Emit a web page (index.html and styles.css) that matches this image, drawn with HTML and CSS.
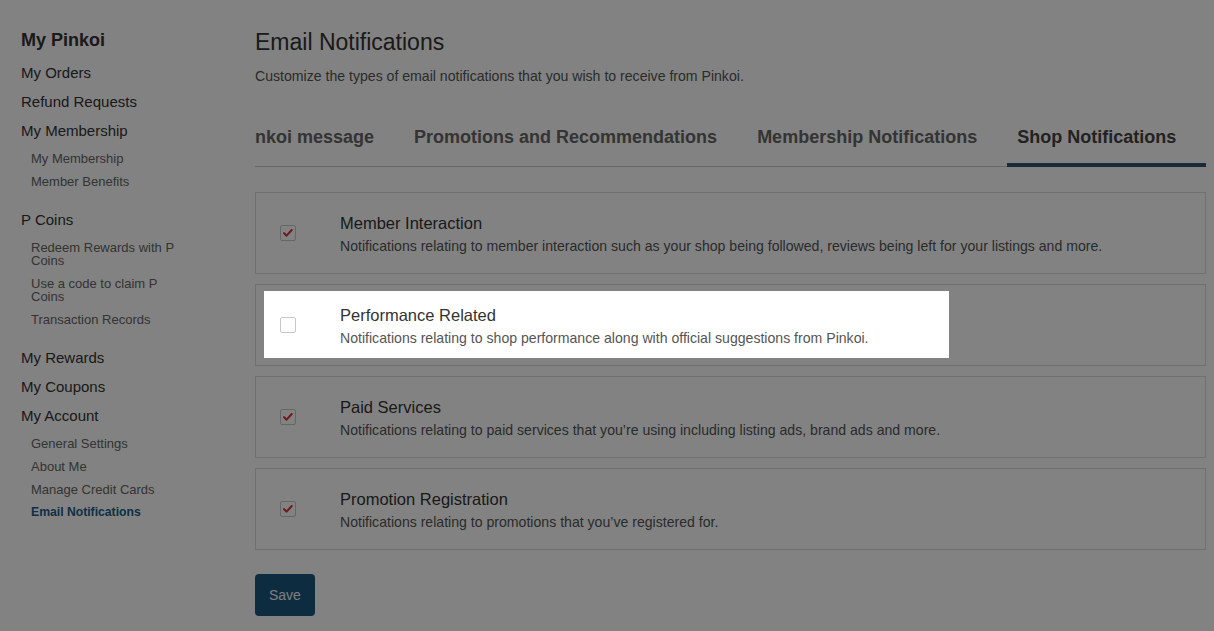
FILE: index.html
```html
<!DOCTYPE html>
<html lang="en">
<head>
<meta charset="utf-8">
<title>Email Notifications</title>
<link rel="stylesheet" href="styles.css">
</head>
<body>
<div class="layout">
  <aside class="sidebar">
    <h2 class="side-title">My Pinkoi</h2>
    <ul class="nav">
      <li class="nav-head">My Orders</li>
      <li class="nav-head">Refund Requests</li>
      <li class="nav-head">My Membership</li>
      <li class="nav-group">
        <ul class="sub">
          <li>My Membership</li>
          <li>Member Benefits</li>
        </ul>
      </li>
      <li class="nav-head">P Coins</li>
      <li class="nav-group">
        <ul class="sub">
          <li>Redeem Rewards with P Coins</li>
          <li>Use a code to claim P Coins</li>
          <li>Transaction Records</li>
        </ul>
      </li>
      <li class="nav-head">My Rewards</li>
      <li class="nav-head">My Coupons</li>
      <li class="nav-head">My Account</li>
      <li class="nav-group">
        <ul class="sub">
          <li>General Settings</li>
          <li>About Me</li>
          <li>Manage Credit Cards</li>
          <li class="active">Email Notifications</li>
        </ul>
      </li>
    </ul>
  </aside>

  <main class="main">
    <h1 class="page-title">Email Notifications</h1>
    <p class="page-desc">Customize the types of email notifications that you wish to receive from Pinkoi.</p>

    <div class="tabs">
      <div class="tab-list">
        <div class="tab">Pinkoi message</div>
        <div class="tab">Promotions and Recommendations</div>
        <div class="tab">Membership Notifications</div>
        <div class="tab tab-active">Shop Notifications</div>
      </div>
    </div>

    <div class="cards">
      <div class="card">
        <span class="check checked"><svg viewBox="0 0 16 16" width="14" height="14"><path d="M3.5 8.2 L6.4 11 L12.3 4.6" fill="none" stroke="#d6393d" stroke-width="2.4" stroke-linecap="round" stroke-linejoin="round"/></svg></span>
        <div class="card-text">
          <div class="card-title">Member Interaction</div>
          <div class="card-desc">Notifications relating to member interaction such as your shop being followed, reviews being left for your listings and more.</div>
        </div>
      </div>
      <div class="card">
        <span class="check"></span>
        <div class="card-text">
          <div class="card-title">Performance Related</div>
          <div class="card-desc">Notifications relating to shop performance along with official suggestions from Pinkoi.</div>
        </div>
        <div class="spotlight"></div>
      </div>
      <div class="card">
        <span class="check checked"><svg viewBox="0 0 16 16" width="14" height="14"><path d="M3.5 8.2 L6.4 11 L12.3 4.6" fill="none" stroke="#d6393d" stroke-width="2.4" stroke-linecap="round" stroke-linejoin="round"/></svg></span>
        <div class="card-text">
          <div class="card-title">Paid Services</div>
          <div class="card-desc">Notifications relating to paid services that you’re using including listing ads, brand ads and more.</div>
        </div>
      </div>
      <div class="card">
        <span class="check checked"><svg viewBox="0 0 16 16" width="14" height="14"><path d="M3.5 8.2 L6.4 11 L12.3 4.6" fill="none" stroke="#d6393d" stroke-width="2.4" stroke-linecap="round" stroke-linejoin="round"/></svg></span>
        <div class="card-text">
          <div class="card-title">Promotion Registration</div>
          <div class="card-desc">Notifications relating to promotions that you’ve registered for.</div>
        </div>
      </div>
    </div>

    <button class="save" type="button">Save</button>
  </main>
</div>
</body>
</html>
```

FILE: styles.css
```css
* { box-sizing: border-box; }

html, body {
  margin: 0;
  background: #fff;
}

body {
  font-family: "Liberation Sans", Arial, sans-serif;
  color: #333;
  overflow: hidden;
  height: 631px;
}

.layout {
  display: flex;
  padding: 28px 8px 0 21px;
}

/* Sidebar */
.sidebar {
  width: 234px;
  flex: none;
}

.side-title {
  margin: 0 0 6px;
  font-size: 18px;
  line-height: 24px;
  font-weight: bold;
  color: #333;
}

.nav, .sub {
  list-style: none;
  margin: 0;
  padding: 0;
}

.nav-head {
  font-size: 15px;
  line-height: 29px;
  color: #333;
}

.nav-group {
  margin-bottom: 14px;
}

.sub {
  padding-left: 10px;
  width: 160px;
}

.sub li {
  font-size: 13px;
  line-height: 13px;
  padding: 7px 0 3px;
  color: #666;
}

.sub li.active {
  color: #1d5d8a;
  font-weight: bold;
  font-size: 12.2px;
}

/* Main */
.main {
  flex: 1;
  min-width: 0;
}

.page-title {
  margin: 0;
  font-size: 23px;
  line-height: 28px;
  font-weight: normal;
  color: #333;
}

.page-desc {
  margin: 10px 0 0;
  font-size: 14.1px;
  line-height: 20px;
  color: #555;
}

.tabs {
  margin-top: 25px;
  overflow: hidden;
  box-shadow: inset 0 -1px 0 #cfcfcf;
}

.tab-list {
  display: flex;
  margin-left: -27px;
  white-space: nowrap;
}

.tab {
  padding: 15px 30px 15px 10px;
  font-size: 18px;
  line-height: 22px;
  font-weight: bold;
  color: #666;
  border-bottom: 4px solid transparent;
}

.tab-active {
  color: #444;
  border-bottom-color: #2d5573;
}

.cards {
  margin-top: 25px;
  display: flex;
  flex-direction: column;
  gap: 10px;
}

.card {
  position: relative;
  display: flex;
  align-items: center;
  height: 82px;
  padding: 0 20px 0 24px;
  border: 1px solid #dcdcdc;
  background: #fff;
}

.check {
  flex: none;
  width: 16px;
  height: 16px;
  margin-right: 44px;
  border: 1px solid #c8c8c8;
  border-radius: 2px;
  background: #fff;
  display: flex;
  align-items: center;
  justify-content: center;
}

.card-title {
  font-size: 16.5px;
  line-height: 24px;
  margin-bottom: 2px;
  color: #333;
}

.card-desc {
  font-size: 14.1px;
  line-height: 18px;
  color: #555;
}

.spotlight {
  position: absolute;
  top: 6px;
  left: 8px;
  width: 685px;
  height: 67px;
  box-shadow: 0 0 0 3000px rgba(0, 0, 0, 0.49);
  pointer-events: none;
  z-index: 10;
}

.save {
  margin-top: 24px;
  height: 42px;
  padding: 0 14px;
  border: 0;
  border-radius: 4px;
  background: #1c577e;
  color: #f2f6f9;
  font-family: "Liberation Sans", Arial, sans-serif;
  font-size: 14px;
}
```
